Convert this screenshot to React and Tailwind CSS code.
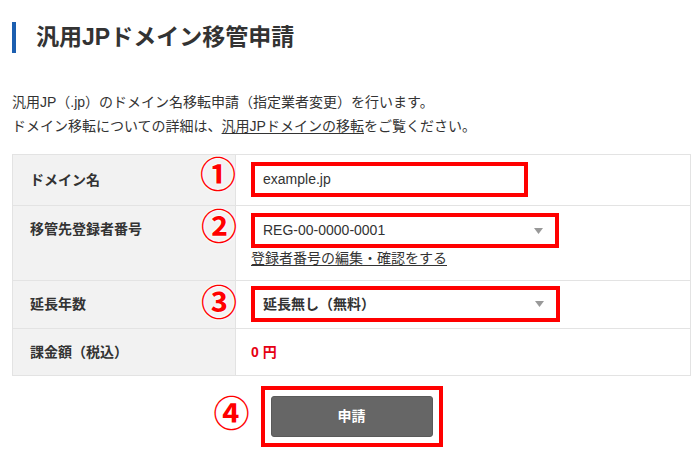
import React from "react";

const font = "font-['Liberation_Sans','Noto_Sans_CJK_JP',sans-serif]";

function Marker({ n, className }) {
  return (
    <span
      className={`absolute text-[36px] leading-none font-bold text-[#ff0000] [text-shadow:0_0_2px_#fff,0_0_2px_#fff,0_0_3px_#fff] ${className}`}
    >
      {n}
    </span>
  );
}

function Arrow() {
  return (
    <svg width="9" height="6" viewBox="0 0 9 6" className="absolute right-[12px] top-1/2 -translate-y-1/2">
      <polygon points="0,0 9,0 4.5,6" fill="#999" />
    </svg>
  );
}

export default function App() {
  return (
    <div className={`w-[700px] h-[462px] bg-white text-[#333] ${font}`}>
      {/* Heading */}
      <div className="pt-[22px] pl-[12px] flex items-center">
        <div className="w-[4px] h-[31px] bg-[#1c5fb0]" />
        <h1 className="ml-[20px] text-[23px] font-bold leading-none">汎用JPドメイン移管申請</h1>
      </div>

      <div className="mt-[37px] pl-[12px] text-[14px] leading-[24px]">
        <p>汎用JP（.jp）のドメイン名移転申請（指定業者変更）を行います。</p>
        <p>
          ドメイン移転についての詳細は、
          <span className="underline underline-offset-2">汎用JPドメインの移転</span>
          をご覧ください。
        </p>
      </div>

      {/* Form table */}
      <div className="mt-[16px] ml-[12px] w-[679px] border border-[#e3e3e3] text-[14px]">
        <div className="flex h-[50px]">
          <div className="w-[223px] bg-[#f2f2f2] border-r border-[#e3e3e3] pl-[17px] flex items-center font-bold">
            ドメイン名
          </div>
          <div className="relative flex-1 pl-[15px] pt-[7px]">
            <Marker n="①" className="left-[-36px] top-[3px]" />
            <div className="w-[277px] h-[35px] border-[4px] border-[#ff0000] flex items-center pl-[8px]">
              example.jp
            </div>
          </div>
        </div>

        <div className="flex h-[75px] border-t border-[#e3e3e3]">
          <div className="w-[223px] bg-[#f2f2f2] border-r border-[#e3e3e3] pl-[17px] pt-[13px] font-bold">
            移管先登録者番号
          </div>
          <div className="relative flex-1 pl-[15px] pt-[7px]">
            <Marker n="②" className="left-[-35px] top-[4px]" />
            <div className="relative w-[308px] h-[35px] border-[4px] border-[#ff0000] flex items-center pl-[8px]">
              REG-00-0000-0001
              <Arrow />
            </div>
            <a className="block mt-[1px] leading-[18px] underline underline-offset-2">登録者番号の編集・確認をする</a>
          </div>
        </div>

        <div className="flex h-[48px] border-t border-[#e3e3e3]">
          <div className="w-[223px] bg-[#f2f2f2] border-r border-[#e3e3e3] pl-[17px] flex items-center font-bold">
            延長年数
          </div>
          <div className="relative flex-1 pl-[15px] pt-[5px]">
            <Marker n="③" className="left-[-35px] top-[5px]" />
            <div className="relative w-[309px] h-[36px] border-[4px] border-[#ff0000] flex items-center pl-[8px] font-bold">
              延長無し（無料）
              <Arrow />
            </div>
          </div>
        </div>

        <div className="flex h-[47px] border-t border-[#e3e3e3]">
          <div className="w-[223px] bg-[#f2f2f2] border-r border-[#e3e3e3] pl-[17px] flex items-center font-bold">
            課金額（税込）
          </div>
          <div className="flex-1 pl-[15px] flex items-center font-bold text-[#e60012]">0 円</div>
        </div>
      </div>

      {/* Submit */}
      <div className="mt-[10px] ml-[12px] w-[679px] flex justify-center">
        <div className="relative">
          <Marker n="④" className="left-[-47px] top-[11px]" />
          <div className="border-[4px] border-[#ff0000] p-[6px]">
            <button className="w-[162px] h-[41px] rounded-[3px] bg-[#666] border border-[#5a5a5a] text-white font-bold text-[14px]">
              申請
            </button>
          </div>
        </div>
      </div>
    </div>
  );
}
